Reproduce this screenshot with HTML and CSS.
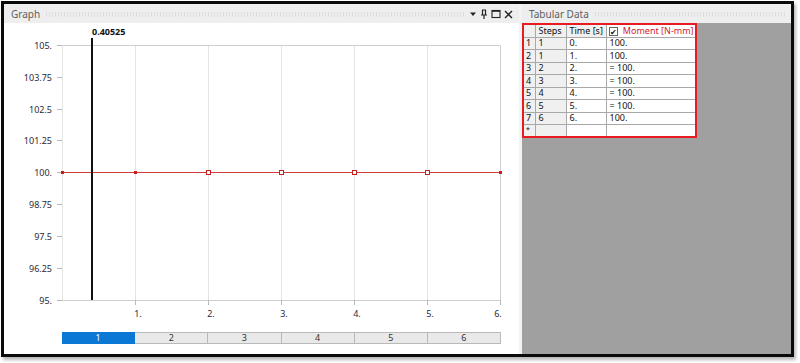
FILE: index.html
```html
<!DOCTYPE html>
<html lang="en">
<head>
    <meta charset="UTF-8">
    <title>Graph and Tabular Data</title>
    <link rel="stylesheet" href="styles.css">
</head>
<body>
    <div class="frame">
        <!-- Graph panel -->
        <section class="panel graph">
            <div class="titlebar">
                <span class="title">Graph</span>
                <span class="grip"></span>
                <span class="tools">
                    <svg width="8" height="8" viewBox="0 0 8 8"><path d="M1 2.5h6L4 6z" fill="#222"/></svg>
                    <svg width="8" height="10" viewBox="0 0 8 10"><path d="M2 1h4M2.5 1v5M5.5 1v5M1 6h6M4 6v4" stroke="#222" stroke-width="1.2" fill="none"/></svg>
                    <svg width="10" height="10" viewBox="0 0 10 10"><rect x="1" y="1.5" width="8" height="7" stroke="#222" stroke-width="1.1" fill="none"/><path d="M1 2h8" stroke="#222" stroke-width="1.6"/></svg>
                    <svg width="9" height="9" viewBox="0 0 9 9"><path d="M1 1l7 7M8 1L1 8" stroke="#222" stroke-width="1.4"/></svg>
                </span>
            </div>
            <div class="graph-body">
                <svg class="chart" width="515" height="305" viewBox="0 0 515 305">
                    <!-- vertical grid -->
                    <g stroke="#e4e4e4" stroke-width="1">
                        <line x1="58.5" y1="22" x2="58.5" y2="277"/>
                        <line x1="131.5" y1="22" x2="131.5" y2="277"/>
                        <line x1="204.5" y1="22" x2="204.5" y2="277"/>
                        <line x1="277.5" y1="22" x2="277.5" y2="277"/>
                        <line x1="350.5" y1="22" x2="350.5" y2="277"/>
                        <line x1="423.5" y1="22" x2="423.5" y2="277"/>
                    </g>
                    <!-- frame -->
                    <g stroke="#cfcfcf" stroke-width="1" fill="none">
                        <path d="M58 22.5H496.5V277.5H58"/>
                    </g>
                    <!-- y ticks -->
                    <g stroke="#b8b8b8" stroke-width="1">
                        <line x1="53" y1="22.5" x2="58" y2="22.5"/>
                        <line x1="53" y1="54.5" x2="58" y2="54.5"/>
                        <line x1="53" y1="86.5" x2="58" y2="86.5"/>
                        <line x1="53" y1="117.5" x2="58" y2="117.5"/>
                        <line x1="53" y1="149.5" x2="58" y2="149.5"/>
                        <line x1="53" y1="181.5" x2="58" y2="181.5"/>
                        <line x1="53" y1="213.5" x2="58" y2="213.5"/>
                        <line x1="53" y1="245.5" x2="58" y2="245.5"/>
                        <line x1="53" y1="277.5" x2="58" y2="277.5"/>
                    </g>
                    <!-- x ticks -->
                    <g stroke="#b8b8b8" stroke-width="1">
                        <line x1="131.5" y1="277" x2="131.5" y2="282"/>
                        <line x1="204.5" y1="277" x2="204.5" y2="282"/>
                        <line x1="277.5" y1="277" x2="277.5" y2="282"/>
                        <line x1="350.5" y1="277" x2="350.5" y2="282"/>
                        <line x1="423.5" y1="277" x2="423.5" y2="282"/>
                        <line x1="496.5" y1="277" x2="496.5" y2="282"/>
                    </g>
                    <g class="ylab" text-anchor="end">
                        <text x="48" y="26">105.</text>
                        <text x="48" y="58">103.75</text>
                        <text x="48" y="90">102.5</text>
                        <text x="48" y="121">101.25</text>
                        <text x="48" y="153">100.</text>
                        <text x="48" y="185">98.75</text>
                        <text x="48" y="217">97.5</text>
                        <text x="48" y="249">96.25</text>
                        <text x="48" y="281">95.</text>
                    </g>
                    <g class="xlab" text-anchor="middle">
                        <text x="134" y="294">1.</text>
                        <text x="207" y="294">2.</text>
                        <text x="280" y="294">3.</text>
                        <text x="353" y="294">4.</text>
                        <text x="426" y="294">5.</text>
                        <text x="494" y="294">6.</text>
                    </g>
                    <!-- moment curve -->
                    <line x1="58" y1="149.5" x2="496" y2="149.5" stroke="#d23b3b" stroke-width="1"/>
                    <g fill="#c42020">
                        <rect x="57" y="148" width="3" height="3"/>
                        <rect x="130" y="148" width="3" height="3"/>
                        <rect x="495" y="148" width="3" height="3"/>
                    </g>
                    <g fill="#fff" stroke="#c42020" stroke-width="1">
                        <rect x="202.5" y="147.5" width="4" height="4"/>
                        <rect x="275.5" y="147.5" width="4" height="4"/>
                        <rect x="348.5" y="147.5" width="4" height="4"/>
                        <rect x="421.5" y="147.5" width="4" height="4"/>
                    </g>
                    <!-- time cursor -->
                    <line x1="88" y1="15" x2="88" y2="277" stroke="#111" stroke-width="2"/>
                    <text class="cursor-lab" x="88" y="12">0.40525</text>
                </svg>
                <div class="steps">
                    <span class="step active">1</span>
                    <span class="step">2</span>
                    <span class="step">3</span>
                    <span class="step">4</span>
                    <span class="step">5</span>
                    <span class="step">6</span>
                </div>
            </div>
        </section>

        <div class="splitter"></div>

        <!-- Tabular data panel -->
        <section class="panel tabular">
            <div class="titlebar">
                <span class="title">Tabular Data</span>
                <span class="grip"></span>
            </div>
            <div class="tab-body">
                <table class="data">
                    <thead>
                        <tr>
                            <th class="rh"></th>
                            <th class="c-steps">Steps</th>
                            <th class="c-time">Time [s]</th>
                            <th class="c-moment"><span class="check">&#10004;</span> Moment [N-mm]</th>
                        </tr>
                    </thead>
                    <tbody>
                        <tr><td class="rh">1</td><td class="ro">1</td><td>0.</td><td>100.</td></tr>
                        <tr><td class="rh">2</td><td class="ro">1</td><td>1.</td><td>100.</td></tr>
                        <tr><td class="rh">3</td><td class="ro">2</td><td>2.</td><td>= 100.</td></tr>
                        <tr><td class="rh">4</td><td class="ro">3</td><td>3.</td><td>= 100.</td></tr>
                        <tr><td class="rh">5</td><td class="ro">4</td><td>4.</td><td>= 100.</td></tr>
                        <tr><td class="rh">6</td><td class="ro">5</td><td>5.</td><td>= 100.</td></tr>
                        <tr><td class="rh">7</td><td class="ro">6</td><td>6.</td><td>100.</td></tr>
                        <tr><td class="rh star">*</td><td class="ro"></td><td></td><td></td></tr>
                    </tbody>
                </table>
            </div>
        </section>
    </div>
</body>
</html>
```

FILE: styles.css
```css
* {
    margin: 0;
    padding: 0;
    box-sizing: border-box;
}

body {
    font-family: 'Noto Sans', 'Open Sans', sans-serif;
    font-size: 9px;
    color: #1e1e1e;
    background: #fff;
    width: 800px;
    height: 363px;
    overflow: hidden;
}

/* Outer window frame */
.frame {
    margin: 1px 0 0 1px;
    width: 793px;
    height: 356px;
    border: 3px solid #0a0a0a;
    box-shadow: 2px 3px 3px rgba(0, 0, 0, 0.28);
    display: flex;
    background: #f0f0f0;
    padding-top: 1px;
}

.panel {
    display: flex;
    flex-direction: column;
}

.graph {
    width: 515px;
}

.splitter {
    width: 3px;
    background: #f3f3f3;
}

.tabular {
    flex: 1;
}

/* Title bars */
.titlebar {
    height: 18px;
    display: flex;
    align-items: center;
    background: #eeeeee;
    padding: 0 6px 0 4px;
    flex-shrink: 0;
}

.title {
    color: #5f5f5f;
    font-size: 10px;
    padding-left: 3px;
}

.grip {
    flex: 1;
    height: 5px;
    margin: 1px 4px 0 5px;
    background-image: radial-gradient(circle, #d2d2d2 0.7px, transparent 0.9px);
    background-size: 3px 2.5px;
}

.tabular .grip {
    margin-right: 0;
}

.tools {
    display: flex;
    align-items: center;
    gap: 3px;
}

.tools svg {
    display: block;
}

/* Graph body */
.graph-body {
    flex: 1;
    background: #fff;
    display: flex;
    flex-direction: column;
}

.chart {
    display: block;
}

.chart text {
    font-family: 'Noto Sans', 'Open Sans', sans-serif;
    font-size: 9px;
    fill: #2a2a3a;
}

.chart .cursor-lab {
    font-weight: bold;
    fill: #111;
}

.steps {
    display: flex;
    margin: 4px 0 0 58px;
    width: 439px;
    height: 12px;
}

.step {
    flex: 1;
    background: #e9e9e9;
    border: 1px solid #b9b9b9;
    border-left: none;
    text-align: center;
    font-size: 9px;
    line-height: 10px;
    color: #333;
}

.step.active {
    background: #0a78d4;
    border-color: #0a78d4;
    color: #fff;
}

/* Tabular body */
.tab-body {
    flex: 1;
    background: #a0a0a0;
}

.data {
    border-collapse: collapse;
    border: 2px solid #e81b23;
    background: #fff;
    table-layout: fixed;
    width: 175px;
}

.data th,
.data td {
    border: 1px solid #a8a8a8;
    height: 12.5px;
    padding: 0 3px;
    font-weight: normal;
    text-align: left;
    white-space: nowrap;
    overflow: hidden;
    font-size: 9px;
    line-height: 10px;
    color: #111;
}

.data th {
    background: #f0f0f0;
    height: 13px;
}

.data .rh {
    width: 12px;
    background: #f0f0f0;
    padding: 0 2px;
}

.data .c-steps {
    width: 31px;
}

.data .c-time {
    width: 40px;
}

.data .c-moment {
    color: #d3202a;
    background: #fff;
    padding-left: 2px;
}

.data .ro {
    background: #f0f0f0;
}

.data .star {
    font-size: 7px;
    vertical-align: top;
}

.check {
    display: inline-block;
    width: 9px;
    height: 9px;
    border: 1px solid #666;
    color: #111;
    font-size: 8px;
    line-height: 7px;
    text-align: center;
    margin-right: 3px;
    vertical-align: -1px;
}
```
